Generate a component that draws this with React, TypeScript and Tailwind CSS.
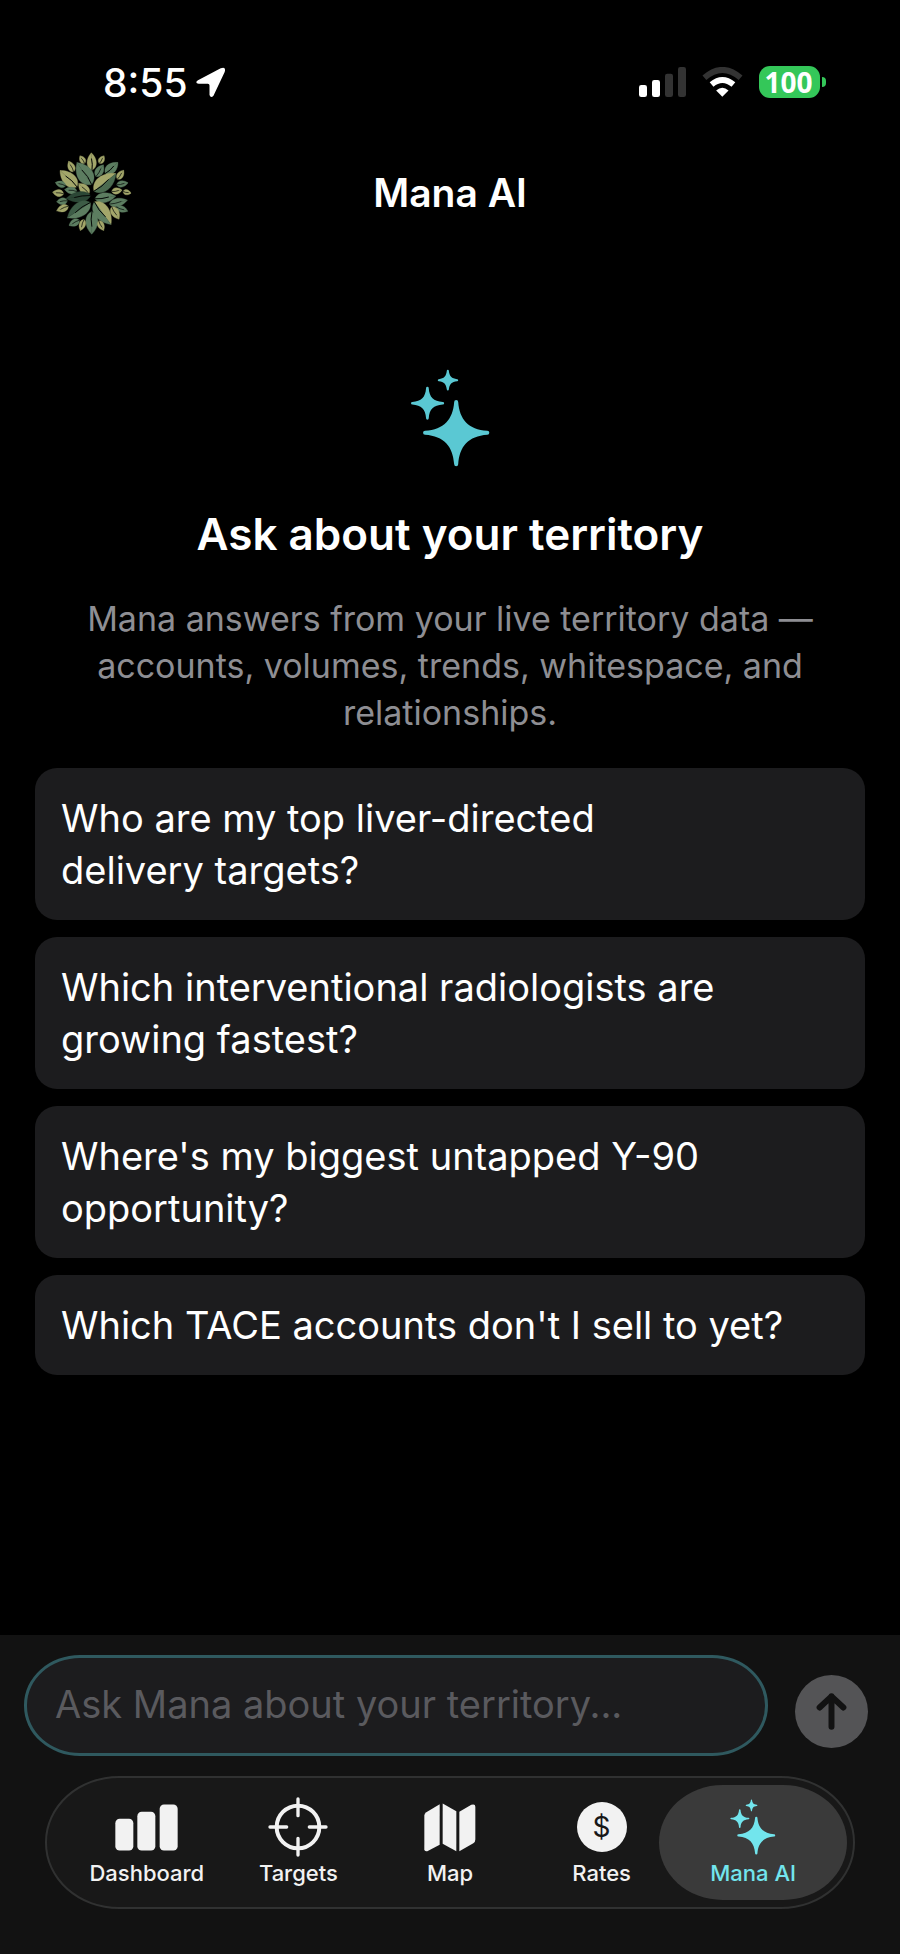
import { useState } from 'react'

const SUGGESTIONS = [
  'Who are my top liver-directed delivery targets?',
  'Which interventional radiologists are growing fastest?',
  "Where's my biggest untapped Y-90 opportunity?",
  "Which TACE accounts don't I sell to yet?",
]

const OLIVE = '#a3a66a'
const GREEN = '#5c7d60'
const PINE = '#2b4635'

// base x, base y, tip x, tip y, width, left half, right half
type Leaf = [number, number, number, number, number, string, string]

const LEAVES: Leaf[] = [
  [156, 390, 154, 338, 32, OLIVE, OLIVE],
  [134, 370, 120, 347, 20, OLIVE, OLIVE],
  [178, 370, 192, 347, 20, OLIVE, OLIVE],
  [101, 395, 86, 363, 24, OLIVE, OLIVE],
  [155, 433, 111, 367, 54, GREEN, GREEN],
  [168, 409, 190, 374, 28, GREEN, GREEN],
  [196, 400, 234, 367, 34, GREEN, GREEN],
  [232, 417, 251, 390, 22, OLIVE, OLIVE],
  [111, 440, 60, 391, 44, OLIVE, OLIVE],
  [162, 453, 228, 400, 52, OLIVE, '#4b6b50'],
  [77, 437, 46, 427, 22, GREEN, GREEN],
  [230, 434, 264, 428, 22, GREEN, GREEN],
  [147, 461, 116, 430, 30, OLIVE, OLIVE],
  [111, 454, 74, 448, 24, GREEN, GREEN],
  [215, 454, 246, 450, 22, OLIVE, OLIVE],
  [249, 454, 273, 459, 18, OLIVE, OLIVE],
  [71, 461, 38, 456, 24, OLIVE, OLIVE],
  [152, 466, 78, 475, 36, PINE, PINE],
  [165, 476, 227, 468, 34, GREEN, GREEN],
  [82, 482, 50, 485, 24, GREEN, GREEN],
  [208, 492, 262, 480, 28, GREEN, GREEN],
  [151, 487, 82, 533, 48, GREEN, '#3d5c46'],
  [163, 485, 213, 553, 52, OLIVE, GREEN],
  [85, 498, 50, 512, 24, OLIVE, OLIVE],
  [230, 501, 263, 513, 22, GREEN, GREEN],
  [215, 500, 237, 537, 28, OLIVE, OLIVE],
  [156, 514, 155, 582, 42, GREEN, GREEN],
  [118, 540, 87, 556, 24, GREEN, GREEN],
  [132, 538, 121, 571, 22, OLIVE, OLIVE],
  [176, 542, 191, 571, 22, OLIVE, OLIVE],
]

function Logo() {
  return (
    <svg viewBox="36 336 240 248" className="h-[83px] w-20" role="img" aria-label="Mana">
      {LEAVES.map(([bx, by, tx, ty, w, left, right], i) => {
        const dx = tx - bx
        const dy = ty - by
        const len = Math.hypot(dx, dy)
        const nx = (-dy / len) * w * 0.58
        const ny = (dx / len) * w * 0.58
        const side = (s: number) =>
          `M${bx} ${by}C${bx + dx * 0.15 + nx * s} ${by + dy * 0.15 + ny * s} ` +
          `${bx + dx * 0.65 + nx * s} ${by + dy * 0.65 + ny * s} ${tx} ${ty}Z`
        return (
          <g key={i}>
            <path d={side(-1)} fill={left} stroke={left} strokeWidth="1" />
            <path d={side(1)} fill={right} stroke={right} strokeWidth="1" />
            <path
              d={`M${bx} ${by}Q${bx + dx * 0.35 + nx * 0.2} ${by + dy * 0.35 + ny * 0.2} ${bx + dx * 0.65} ${by + dy * 0.65}`}
              fill="none"
              stroke="#060a07"
              strokeWidth={w > 30 ? 3 : 2}
              strokeLinecap="round"
            />
          </g>
        )
      })}
    </svg>
  )
}

function Sparkles({ className }: { className: string }) {
  return (
    <svg viewBox="183 658 236 292" className={className} fill="currentColor" aria-hidden="true">
      <path d="M312 756a6 6 0 0 1 12 0C328 808 354 838 411 842a6 6 0 0 1 0 12C354 858 328 888 324 942a6 6 0 0 1-12 0C308 888 282 858 225 854a6 6 0 0 1 0-12C282 838 308 808 312 756Z" />
      <path d="M228 715a4 4 0 0 1 8 0C238 742 250 754 278 756a4 4 0 0 1 0 8C250 766 238 778 236 805a4 4 0 0 1-8 0C226 778 214 766 187 764a4 4 0 0 1 0-8C214 754 226 742 228 715Z" />
      <path d="M290 663a3 3 0 0 1 6 0C298 680 304 686 321 688a3 3 0 0 1 0 6C304 696 298 702 296 719a3 3 0 0 1-6 0C288 702 282 696 266 694a3 3 0 0 1 0-6C282 686 288 680 290 663Z" />
    </svg>
  )
}

function DashboardIcon() {
  return (
    <svg viewBox="346 553 189 140" className="h-[47px] w-[63px]" fill="currentColor" aria-hidden="true">
      <rect x="347" y="597" width="54" height="95" rx="13" />
      <rect x="413" y="576" width="54" height="116" rx="13" />
      <rect x="480" y="554" width="54" height="138" rx="13" />
    </svg>
  )
}

function TargetsIcon() {
  return (
    <svg viewBox="0 0 180 180" className="size-[60px]" fill="none" stroke="currentColor" strokeLinecap="round" aria-hidden="true">
      <circle cx="90" cy="90" r="64" strokeWidth="12" />
      <path d="M90 6v50M90 124v50M6 90h50M124 90h50" strokeWidth="10" />
    </svg>
  )
}

function MapIcon() {
  return (
    <svg viewBox="42 39 156 146" className="h-[49px] w-[52px]" fill="currentColor" aria-hidden="true">
      <path d="M89 42v122L52 183q-9 2-9-6V76q0-6 6-10Z" />
      <path d="M98 40l41 23v120l-41-22Z" />
      <path d="M148 65l36-21q12-4 12 6v98q0 8-6 11l-42 24Z" />
    </svg>
  )
}

function RatesIcon() {
  return (
    <span className="flex size-[50px] items-center justify-center rounded-full bg-[#f2f2f2] text-[28px] leading-none text-[#181818]" aria-hidden="true">
      $
    </span>
  )
}

const TABS = [
  { label: 'Dashboard', icon: <DashboardIcon /> },
  { label: 'Targets', icon: <TargetsIcon /> },
  { label: 'Map', icon: <MapIcon /> },
  { label: 'Rates', icon: <RatesIcon /> },
  { label: 'Mana AI', icon: <Sparkles className="h-14 w-[46px]" /> },
]

function StatusBar() {
  return (
    <div className="flex h-[132px] items-center justify-between pt-8 pr-[74px] pl-[103px]">
      <div className="flex items-center gap-[7px]">
        <span className="text-[39px] leading-none font-medium">8:55</span>
        <svg viewBox="466 82 92 94" className="h-[31px] w-[31px]" fill="#fff" aria-hidden="true">
          <path d="M474 122L543 86Q560 80 555 97L521 169Q513 178 509 167V138Q509 133 504 133H476Q463 130 474 122Z" />
        </svg>
      </div>
      <div className="flex items-center gap-4">
        <svg viewBox="0 0 141 90" className="h-[30px] w-[47px]" aria-label="Signal" role="img">
          <rect x="0" y="54" width="24" height="36" rx="7" fill="#fff" />
          <rect x="39" y="39" width="24" height="51" rx="7" fill="#fff" />
          <rect x="78" y="20" width="24" height="70" rx="7" fill="#333" />
          <rect x="117" y="0" width="24" height="90" rx="7" fill="#333" />
        </svg>
        <svg viewBox="305 79 125 92" className="h-[30px] w-[41px]" fill="none" aria-label="Wi-Fi" role="img">
          <path d="M312 112Q367 64 423 112" stroke="#333" strokeWidth="18" />
          <path d="M334 133Q367 105 401 133" stroke="#fff" strokeWidth="18" />
          <path d="M348 151Q367 134 386 151L367 170Z" fill="#fff" />
        </svg>
        <div className="flex items-center gap-0.5">
          <span className="flex h-8 w-[61px] items-center justify-center rounded-[11px] bg-[#34c759] pr-0.5 font-['Open_Sans',sans-serif] text-[28px] leading-none font-bold">
            100
          </span>
          <span className="h-[10px] w-1 rounded-r-full bg-[#34c759]" />
        </div>
      </div>
    </div>
  )
}

export default function App() {
  const [active, setActive] = useState('Mana AI')
  const [question, setQuestion] = useState('')

  return (
    <div className="flex min-h-screen flex-col bg-black font-['Inter',sans-serif] text-white">
      <StatusBar />

      <header className="grid grid-cols-[80px_1fr_80px] items-center px-[52px] pt-5">
        <Logo />
        <h1 className="pb-0.5 text-center text-[39px] leading-[46px] font-semibold">Mana AI</h1>
      </header>

      <main className="flex flex-1 flex-col px-[35px] pt-[134px]">
        <Sparkles className="h-[98px] w-[79px] self-center text-[#5ac8d3]" />
        <h2 className="mt-[38px] text-center text-[44px] leading-[58px] font-semibold">
          Ask about your territory
        </h2>
        <p className="mt-8 px-12 text-center text-[34px] leading-[47px] text-[#8e8e93]">
          Mana answers from your live territory data — accounts, volumes, trends, whitespace, and relationships.
        </p>
        <div className="mt-8 flex flex-col gap-[17px]">
          {SUGGESTIONS.map((s) => (
            <button key={s} onClick={() => setQuestion(s)}
              className="rounded-[22px] bg-[#1c1c1e] py-6 pr-[130px] pl-[26px] text-left text-[38px]
                         leading-[52px] last:pr-[26px]">
              {s}
            </button>
          ))}
        </div>
      </main>

      <footer className="bg-[#121212] pt-5 pb-[45px]">
        <form onSubmit={(e) => e.preventDefault()} className="flex items-center gap-[27px] pr-8 pl-6">
          <input value={question} onChange={(e) => setQuestion(e.target.value)}
            aria-label="Ask Mana" placeholder="Ask Mana about your territory..."
            className="h-[101px] min-w-0 flex-1 rounded-[56px/50px] border-3 border-[#2f595f] bg-[#1c1c1e]
                       px-7 pb-1 text-[38px] outline-none placeholder:text-[#5a5a5e]" />
          <button type="submit" aria-label="Send"
            className="mt-3 flex size-[73px] items-center justify-center rounded-full bg-[#545456]">
            <svg viewBox="0 0 92 112" className="h-[37px] w-[31px]" fill="none" stroke="#121212"
              strokeWidth="18" strokeLinecap="round" strokeLinejoin="round" aria-hidden="true">
              <path d="M46 102V10M10 44L46 10L82 44" />
            </svg>
          </button>
        </form>

        <nav className="mx-[45px] mt-5 flex h-[133px] rounded-[74px/66px] border-2 border-[#303131] bg-[#181818] px-6">
          {TABS.map(({ label, icon }) => (
            <button key={label} onClick={() => setActive(label)}
              className={`relative flex-1 ${active === label ? 'text-[#72e5ed]' : 'text-[#f2f2f2]'}`}>
              {active === label && (
                <span className="absolute -inset-x-[18px] inset-y-[7px] rounded-[64px/58px] bg-[#3a3a3a]" />
              )}
              <span className="relative flex flex-col items-center pb-0.5">
                <span className="flex h-[60px] items-center">{icon}</span>
                <span className="mt-[3px] text-[22px] leading-[26px] font-medium whitespace-nowrap">{label}</span>
              </span>
            </button>
          ))}
        </nav>
      </footer>
    </div>
  )
}
